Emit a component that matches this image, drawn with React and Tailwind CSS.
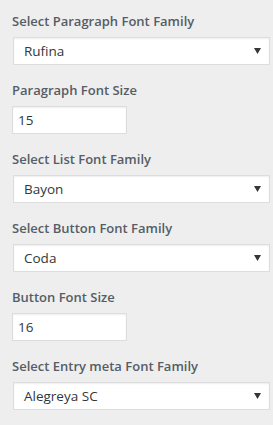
import React from "react";

const font = { fontFamily: "'Open Sans', Lato, 'Liberation Sans', sans-serif" };

function Arrow() {
  return (
    <svg width="7" height="6" viewBox="0 0 7 6" className="shrink-0">
      <path d="M0 0 H7 L3.5 6 Z" fill="#32373c" />
    </svg>
  );
}

function Label({ children }) {
  return (
    <div className="h-[24px] leading-[24px] text-[13px] font-semibold text-[#555d66] whitespace-nowrap">{children}</div>
  );
}

function SelectControl({ label, value }) {
  return (
    <div className="flex flex-col gap-[4px]">
      <Label>{label}</Label>
      <div className="ml-[1px] w-[257px] h-[28px] flex items-center justify-between pl-[10px] pr-[8px] bg-white border border-[#dddddd] shadow-[inset_0_1px_2px_rgba(0,0,0,0.07)]">
        <span className="text-[13.5px] text-[#32373c]">{value}</span>
        <Arrow />
      </div>
    </div>
  );
}

function InputControl({ label, value }) {
  return (
    <div className="flex flex-col gap-[4px]">
      <Label>{label}</Label>
      <div className="w-[115px] h-[28px] flex items-center pl-[5px] bg-white border border-[#dddddd] shadow-[inset_0_1px_2px_rgba(0,0,0,0.07)]">
        <span className="text-[13.5px] text-[#32373c]">{value}</span>
      </div>
    </div>
  );
}

export default function App() {
  return (
    <div className="w-[273px] h-[425px] bg-[#eeeeee] pl-[12px] pt-[9px] flex flex-col gap-[13px] overflow-hidden" style={font}>
      <SelectControl label="Select Paragraph Font Family" value="Rufina" />
      <InputControl label="Paragraph Font Size" value="15" />
      <SelectControl label="Select List Font Family" value="Bayon" />
      <SelectControl label="Select Button Font Family" value="Coda" />
      <InputControl label="Button Font Size" value="16" />
      <SelectControl label="Select Entry meta Font Family" value="Alegreya SC" />
    </div>
  );
}
